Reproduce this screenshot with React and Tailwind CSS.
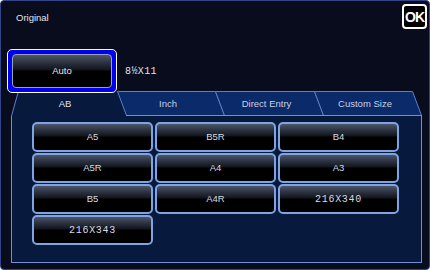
import React from "react";

const sizes = [
  { label: "A5" },
  { label: "B5R" },
  { label: "B4" },
  { label: "A5R" },
  { label: "A4" },
  { label: "A3" },
  { label: "B5" },
  { label: "A4R" },
  { label: "216X340", mono: true },
  { label: "216X343", mono: true },
];

const btnBg =
  "bg-[linear-gradient(to_bottom,#4c5467_0%,#2a303e_25%,#12151c_46%,#000_50%,#000_100%)]";

function Tab({ width, label, active, first, last }) {
  const w = width;
  const h = 25;
  return (
    <div className="relative flex items-center justify-center shrink-0" style={{ width: w, height: h }}>
      <svg
        className="absolute left-0 top-0 overflow-visible"
        width={w + 10}
        height={h}
        viewBox={`0 0 ${w + 10} ${h}`}
      >
        {active ? (
          <>
            <polygon points={`7,0 ${w + 1},0 ${w + 10},${h} 0,${h}`} fill="#07193c" />
            <line x1="7.5" y1="0" x2="0.5" y2={h} stroke="#5f7fc4" strokeWidth="1" />
          </>
        ) : (
          <>
            <polygon points={`0.5,0.5 ${w + 0.5},0.5 ${w + 9.5},24.5 9.5,24.5`} fill="#0a2a6a" />
            <polyline
              points={`9.5,24.5 0.5,0.5 ${w + 0.5},0.5 ${w + 9.5},24.5`}
              fill="none"
              stroke="#5f7fc4"
              strokeWidth="1"
            />
            <line x1="9" y1="24.5" x2={w + 10} y2="24.5" stroke="#6f8fd6" strokeWidth="1" />
          </>
        )}
      </svg>
      <span
        className={`relative text-[9.5px] ${active ? "text-[#dde2ee]" : "text-[#c9d0e2]"}`}
        style={{ marginLeft: first ? 2 : 4, marginTop: 1 }}
      >
        {label}
      </span>
    </div>
  );
}

export default function App() {
  return (
    <div className="w-[430px] h-[270px] rounded-[4px] border border-[#34448a] bg-[#080c1c] overflow-hidden font-['Liberation_Sans',sans-serif]">
      {/* Header */}
      <div className="flex items-start justify-between pl-[15px] pr-[2px] pt-[3px]">
        <span className="mt-[7px] text-[9.5px] text-[#e4e6ee]">Original</span>
        <div className="w-[25px] h-[25px] rounded-[4px] border-2 border-white bg-black flex items-center justify-center">
          <span className="text-[14px] font-bold text-white tracking-[-1px] leading-none">OK</span>
        </div>
      </div>

      {/* Auto row */}
      <div className="relative z-10 flex items-center mt-[20px] pl-[6px]">
        <div className="w-[110px] h-[44px] rounded-[5px] border border-white bg-[#0000f0] p-[4px]">
          <div
            className={`w-full h-full rounded-[4px] border border-[#9aa2b6] ${btnBg} flex items-center justify-center`}
          >
            <span className="text-[9.5px] text-[#e6e8f0] mt-[1px]">Auto</span>
          </div>
        </div>
        <span className="ml-[8px] mt-[1px] font-['Liberation_Mono',monospace] text-[10px] tracking-[0.4px] text-[#e0e2ea]">
          8½X11
        </span>
      </div>

      {/* Tabs */}
      <div className="-mt-[2px] flex pl-[10px]">
        <Tab width={106} label="AB" active first />
        <Tab width={98} label="Inch" />
        <Tab width={99} label="Direct Entry" />
        <Tab width={98} label="Custom Size" last />
      </div>

      {/* Panel */}
      <div className="ml-[10px] w-[411px] h-[147px] border-x border-b border-[#6f8fd6] bg-[#07193c] pl-[20px] pt-[6px]">
        <div className="grid grid-cols-[121px_121px_121px] auto-rows-[30px] gap-x-[2px] gap-y-[1px]">
          {sizes.map((s) => (
            <div
              key={s.label}
              className={`rounded-[5px] border-2 border-[#7fa4e4] ${btnBg} flex items-center justify-center`}
            >
              <span
                className={
                  s.mono
                    ? "font-['Liberation_Mono',monospace] text-[10px] tracking-[0.7px] text-[#d6dae6]"
                    : "text-[9.5px] text-[#d6dae6]"
                }
              >
                {s.label}
              </span>
            </div>
          ))}
        </div>
      </div>
    </div>
  );
}
